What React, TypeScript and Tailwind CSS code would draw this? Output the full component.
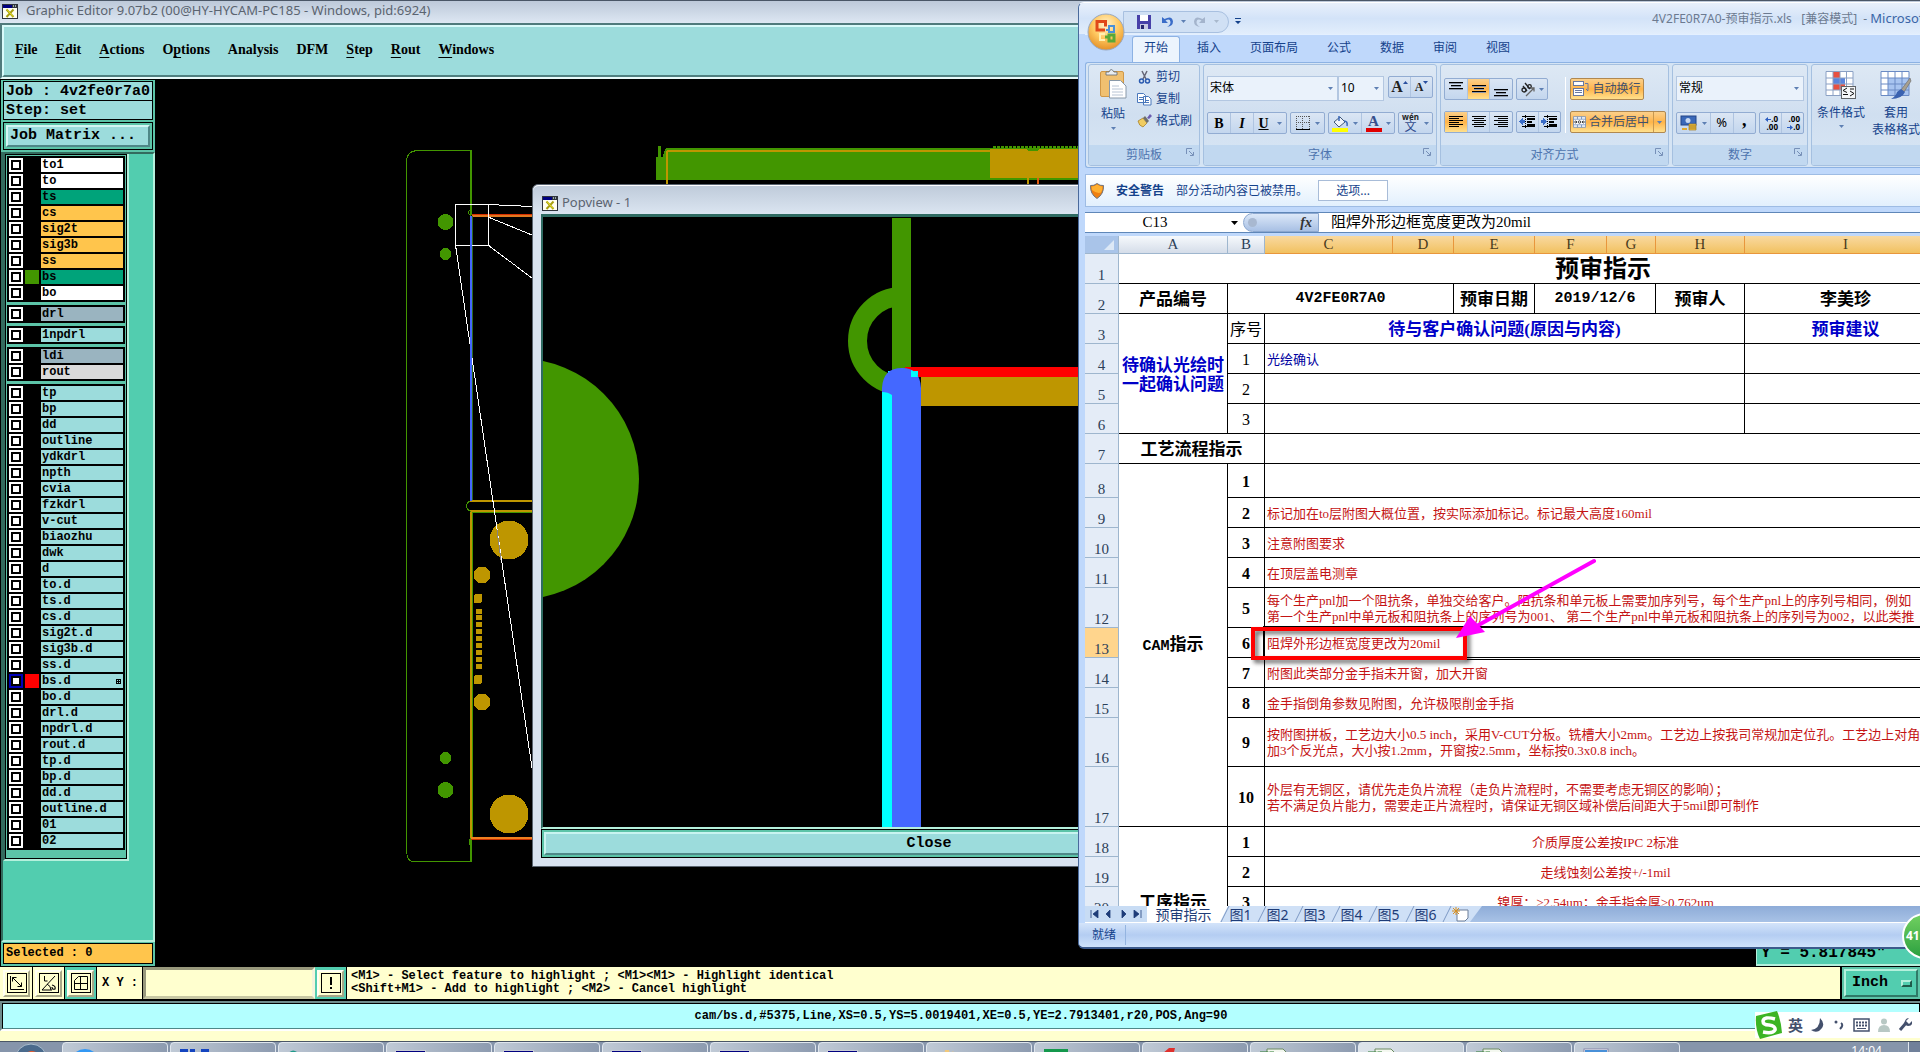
import React from 'react';

const SERIF = "font-['Liberation_Serif','Noto_Sans_CJK_SC',serif]";
const MONO = "font-['Liberation_Mono','Noto_Sans_CJK_SC',monospace]";
const UI = "font-['Noto_Sans','Noto_Sans_CJK_SC',sans-serif]";

/* ---------- CAM editor ---------- */

function XIcon() {
  return (
    <svg width="16" height="15" viewBox="0 0 16 15" className="shrink-0">
      <rect width="16" height="15" fill="#30343c" />
      <rect x="1" y="4" width="14" height="10" fill="#fffef0" />
      <rect x="1" y="1" width="9" height="3" fill="#000080" />
      <rect x="11" y="1" width="1" height="2" fill="#9aa" />
      <rect x="13" y="1" width="1" height="2" fill="#9aa" />
      <path d="M4.500 5.500l7 7.500M11.500 5.500l-7 7.500" stroke="#a8a010" strokeWidth="2" />
      <path d="M5 5.500l6 7" stroke="#e8e020" strokeWidth="1" />
    </svg>
  );
}

const menus: [string, string, string][] = [
  ['', 'F', 'ile'], ['', 'E', 'dit'], ['', 'A', 'ctions'], ['O', 'p', 'tions'], ['Analysis', '', ''],
  ['DFM', '', ''], ['', 'S', 'tep'], ['', 'R', 'out'], ['', 'W', 'indows'],
];

type Layer = { name: string; bg?: string; swatch?: string };
const WHITE = 'bg-white';
const GREEN = 'bg-[#00a37a]';
const ORANGE = 'bg-[#ffc54c]';
const STEEL = 'bg-[#9ab4c0]';
const AQUA = 'bg-[#9cdcdc]';

const layerGroups: Layer[][] = [
  [
    { name: 'to1', bg: WHITE }, { name: 'to', bg: WHITE }, { name: 'ts', bg: GREEN }, { name: 'cs', bg: ORANGE },
    { name: 'sig2t', bg: ORANGE }, { name: 'sig3b', bg: ORANGE }, { name: 'ss', bg: ORANGE },
    { name: 'bs', bg: GREEN, swatch: 'bg-[#429600]' }, { name: 'bo', bg: WHITE },
  ],
  [{ name: 'drl', bg: STEEL }],
  [{ name: '1npdrl' }],
  [{ name: 'ldi', bg: STEEL }, { name: 'rout', bg: 'bg-[#dadada]' }],
  [
    ...['tp', 'bp', 'dd', 'outline', 'ydkdrl', 'npth', 'cvia', 'fzkdrl', 'v-cut', 'biaozhu', 'dwk', 'd', 'to.d', 'ts.d', 'cs.d', 'sig2t.d', 'sig3b.d', 'ss.d'].map((name) => ({ name })),
    { name: 'bs.d', swatch: 'bg-[#ff0000]' },
    ...['bo.d', 'drl.d', 'npdrl.d', 'rout.d', 'tp.d', 'bp.d', 'dd.d', 'outline.d', '01', '02'].map((name) => ({ name })),
  ],
];

function LayerRow({ layer }: { layer: Layer }) {
  const active = layer.name === 'bs.d';
  const id = `layer-${layer.name}`;
  return (
    <div className="flex h-[14px] gap-[2px]">
      <input
        id={id}
        type="checkbox"
        className={`m-0 size-[14px] shrink-0 appearance-none border-2 bg-white ${active ? 'border-[#0000b8]' : 'border-white'} shadow-[inset_0_0_0_2px_#000]`}
      />
      <span className={`w-[14px] shrink-0 ${layer.swatch ?? 'bg-black'}`} />
      <label htmlFor={id} className={`flex flex-1 items-center justify-between pr-[2px] pl-[1px] leading-[14px] ${layer.bg ?? AQUA}`}>
        {layer.name}
        {active && (
          <svg width="5" height="5" viewBox="0 0 5 5" shapeRendering="crispEdges">
            <path d="M0 .5h5M0 2.500h5M0 4.500h5M.5 0v5M2.500 0v5M4.500 0v5" stroke="#000" strokeWidth="1" />
            <path d="M1 1h1v1H1zM3 1h1v1H3zM1 3h1v1H1zM3 3h1v1H3z" fill="#9cdcdc" />
          </svg>
        )}
      </label>
    </div>
  );
}

function SidePanel() {
  return (
    <aside className={`flex w-[155px] shrink-0 flex-col border-t border-l border-black bg-[#5cc4a8] font-bold text-black ${MONO}`}>
      <div className="flex flex-col px-[2px] pt-[1px] text-[15px] whitespace-pre">
        <div className="h-[20px] border border-black bg-[#9cdcdc] pl-[2px] leading-[19px]">Job : 4v2fe0r7a0</div>
        <div className="h-[19px] border border-t-0 border-black bg-[#9cdcdc] pl-[2px] leading-[19px]">Step: set</div>
        <div className="mt-[2px] h-[28px] border border-black p-[2px]">
          <button className="block h-full w-full border-2 border-t-[#d4f6f4] border-r-[#4f8888] border-b-[#4f8888] border-l-[#d4f6f4] bg-[#9cdcdc] pl-[2px] text-left leading-[18px]">
            Job Matrix ...
          </button>
        </div>
      </div>
      <div className="mt-[2px] flex-1 border-2 border-t-[#336b5e] border-r-[#b4f0dc] border-b-[#b4f0dc] border-l-[#336b5e] bg-[#52cdaf]">
        <div className="w-[126px] border-r-2 border-b-2 border-l-2 border-r-[#b4f0dc] border-b-[#b4f0dc] border-l-[#336b5e]">
          <div className="border border-black bg-[#5cc4a8] px-[1px] pt-[1px] pb-[8px] text-[12px]">
            <div className="flex flex-col gap-[3px]">
              {layerGroups.map((g, i) => (
                <div key={i} className="flex flex-col gap-[2px] bg-black p-[2px]">
                  {g.map((l) => <LayerRow key={l.name} layer={l} />)}
                </div>
              ))}
            </div>
          </div>
        </div>
      </div>
      <div className="mx-[2px] mt-[1px] mb-[2px] h-[21px] border border-black bg-[#ffc54c] pl-[2px] text-[12px] leading-[18px]">Selected : 0</div>
    </aside>
  );
}

function Board() {
  const pads = [611, 617, 624, 631, 638, 645, 652, 659, 666];
  const teeth = Array.from({ length: 28 }, (_, i) => 993 + i * 4);
  return (
    <svg className="h-full w-full bg-black" shapeRendering="crispEdges">
      <g transform="translate(-155 -79)" fill="none">
        <path d="M471.500 215V150.500H417.500Q406.500 151 406.500 162V850Q407 861.500 413 861.500H471.500V838" stroke="#429600" />
        <path d="M471 151V215M471 838V861" stroke="#429600" strokeWidth="2" />
        <g fill="#429600">
          <circle cx="445.500" cy="222" r="8" /><circle cx="445.500" cy="254" r="6" />
          <circle cx="445.500" cy="758" r="6" /><circle cx="445.500" cy="790" r="8" />
        </g>
        <path d="M472 214.500H532" stroke="#d83000" />
        <path d="M472 216H532" stroke="#e07820" strokeWidth="2" />
        <path d="M472.500 216V500" stroke="#2c6a20" />
        <path d="M470 501H532M470 511H532" stroke="#be9600" strokeWidth="2" />
        <path d="M472.500 512.500H532M472.500 512V838M471 500Q462 506 471 512M471 209Q466 213 471 216M471 838q-4 4 0 8" stroke="#429600" />
        <path d="M471 512V838" stroke="#be9600" strokeWidth="2" />
        <path d="M471 838H532" stroke="#f08020" strokeWidth="2" />
        <path d="M471 839.500H532" stroke="#c83000" />
        <g fill="#be9600">
          <circle cx="509" cy="540" r="19.500" /><circle cx="509" cy="814" r="19.500" />
          <circle cx="482" cy="575" r="8.500" /><circle cx="482" cy="702" r="8.500" />
          <rect x="474" y="594" width="8" height="9" rx="2" /><rect x="474" y="675" width="8" height="9" rx="2" />
          {pads.map((y) => <rect key={y} x="476" y={y - 2} width="6" height="5" />)}
        </g>
        <path d="M455.500 204.500H488.500V245.500H455.500ZM488 204.500L532 206.500M488 217L532 235M488 245L532 278M455.500 245L532 768" stroke="#fff" />
        <path d="M497 530L501 560" stroke="#8c8478" />
        <path d="M471 216V501" stroke="#4468ff" strokeWidth="2" />
        <path d="M656 157H658V146H661V157H663Q664 148 668 148H1100V180H656Z" fill="#429600" />
        <path d="M666.500 184V153Q667 150.500 670 150.500H1090" stroke="#be9600" strokeWidth="2" />
        <rect x="990" y="149" width="100" height="29" fill="#be9600" />
        <path d="M1025 148h16l-4 3h-8z" fill="#429600" />
        {teeth.map((x) => <rect key={x} x={x} y="146" width="3" height="2" fill="#429600" />)}
        <path d="M1027.500 178V184" stroke="#be9600" strokeWidth="2" />
        <path d="M1037.500 178V184" stroke="#e05a10" strokeWidth="2" />
      </g>
    </svg>
  );
}

function Popview() {
  return (
    <section className="absolute top-[184px] bottom-[185px] left-[532px] flex w-[794px] flex-col rounded-t-md border border-[#5a6470] bg-[#d9e3f0] px-[8px] pb-[8px]">
      <header className={`-mx-[8px] flex h-[29px] shrink-0 items-center gap-[4px] rounded-t-md border-t border-white bg-linear-to-b from-[#bfcbda] to-[#dbe5f1] pt-[6px] pl-[9px] text-[13px] text-[#5b6470] ${UI}`}>
        <XIcon />
        Popview - 1
      </header>
      <div className="min-h-0 flex-1 border-t-[3px] border-b-2 border-l-2 border-t-[#2f6b62] border-b-[#b4f0dc] border-l-[#2f6b62] bg-black">
        <svg className="block h-full w-full bg-black">
          <g transform="translate(-543 -217)">
            <circle cx="518.500" cy="479" r="120.500" fill="#429600" />
            <path d="M911 296.500H902A44.500 44.500 0 0 0 902 385.500" fill="none" stroke="#429600" strokeWidth="19" />
            <path d="M892 218h19v155h-19z" fill="#429600" />
            <path d="M905 367h500v10h-500z" fill="#f00" />
            <path d="M921 377h500v29h-500z" fill="#be9600" />
            <path d="M882 388h20v500h-20zM888 371h30v6h-30z" fill="#0ff" />
            <path d="M882 392V388Q883 368 902 368Q920 368 921 388V900H892V395Q888 392 882 392Z" fill="#4468ff" />
            <path d="M911 370q6 2 7 7h-7z" fill="#0ff" />
          </g>
        </svg>
      </div>
      <div className="h-[29px] shrink-0 border border-black bg-[#5cc4a8] p-[2px]">
        <button className={`block h-full w-full border-2 border-t-[#c8f4f0] border-r-[#4f8888] border-b-[#4f8888] border-l-[#c8f4f0] bg-[#9cdcdc] text-[15px] leading-[20px] font-bold text-black ${MONO}`}>
          Close
        </button>
      </div>
    </section>
  );
}

function ToolButton({ teal, label, children }: { teal?: boolean; label: string; children: React.ReactNode }) {
  return (
    <div className={`flex w-[32px] shrink-0 items-center justify-center border-r border-black ${teal ? 'bg-[#52cdaf]' : 'bg-[#ffffcf]'}`}>
      <button aria-label={label} className="flex size-[27px] items-center justify-center border-2 border-t-[#fffff4] border-r-[#a8a888] border-b-[#a8a888] border-l-[#fffff4] bg-[#ffffcf]">
        <svg width="20" height="20" viewBox="0 0 20 20" fill="none" stroke="#000" strokeWidth="1">
          <rect x=".5" y=".5" width="19" height="19" />
          {children}
        </svg>
      </button>
    </div>
  );
}

function CommandBar() {
  return (
    <div className={`flex h-[35px] border-t border-b-2 border-black bg-[#ffffcf] pl-[1px] text-[12px] font-bold text-black ${MONO}`}>
      <ToolButton label="Measure"><path d="M3.500 3v13.500H17M5.500 4.500l9 9M5.500 4.500v4M5.500 4.500h4M14.500 13.500v-4M14.500 13.500h-4" /></ToolButton>
      <ToolButton label="Angle"><path d="M3 17L16 3M5.500 3v5h3M3 17h10M8 11q4 2 4 6" /><path d="M13 12q4 1 3 4q-3 1-3-2" strokeWidth="1.200" /></ToolButton>
      <ToolButton teal label="Grid"><path d="M3.500 16.500v-9l4-4h9v13zM3.500 10.500h13M9.500 3.500v13" /></ToolButton>
      <label htmlFor="xy" className="flex w-[46px] shrink-0 items-center justify-center whitespace-pre">X Y :</label>
      <input id="xy" defaultValue="" className="w-[172px] shrink-0 border-[3px] border-t-[#98987c] border-r-[#f4f4dc] border-b-[#c8c8a4] border-l-[#98987c] bg-[#ffffcf] outline outline-black" />
      <ToolButton teal label="Information"><path d="M10 4v8M10 14v2" strokeWidth="2" /></ToolButton>
      <div className="ml-[4px] flex-1 pt-[3px] leading-[13px] whitespace-pre">
        <p>{'<M1> - Select feature to highlight ; <M1><M1> - Highlight identical'}</p>
        <p>{'<Shift+M1> - Add to highlight ; <M2> - Cancel highlight'}</p>
      </div>
      <div className="w-[80px] border-l-2 border-black bg-[#5cc4a8] p-[2px]">
        <button className={`flex h-full w-full items-center justify-between border-2 border-t-[#b4f0dc] border-r-[#2f7a68] border-b-[#2f7a68] border-l-[#b4f0dc] bg-[#52cdaf] pr-[4px] pl-[6px] text-[15px] ${MONO}`}>
          Inch
          <span className="h-[7px] w-[11px] border-2 border-t-[#b4f0dc] border-r-[#1f5a4a] border-b-[#1f5a4a] border-l-[#b4f0dc]" />
        </button>
      </div>
    </div>
  );
}

/* ---------- Taskbar ---------- */

const appIcons = [
  <circle key="a" cx="14" cy="18" r="15" fill="#3398f4" />,
  <path key="b" d="M1 3h8v24H1zM11 3h5v24h-5zM22 3h8v24h-8z" fill="#1444c0" />,
  <path key="c" d="M1 8q4-6 9-2l2 3h12v16H1z" fill="#1f9a8a" />,
  ...[0, 1, 2, 3, 4].map((n) => (
    <g key={'w' + n}><rect x="0" y="4" width="31" height="24" fill="#c8ccd4" /><rect x="1" y="5" width="29" height="8" fill="#000080" /><path d="M19 7h2v2h-2zM23 7h2v2h-2zM27 7h2v2h-2z" fill="#fff" /></g>
  )),
  <path key="h" d="M14 30L3 14l3-5 3 2 1-7h4l1 5 3-4 3 6 4-1z" fill="#f0c87c" />,
  <path key="i" d="M1 3h24v4H9l-3 20H1z" fill="#14984c" />,
  <path key="j" d="M4 14L18 2h6l-3 12 2 14H8z" fill="#e0302c" />,
  ...[0, 1, 2].map((n) => (
    <g key={'x' + n}><path d="M8 3h16l6 6v20H8z" fill="#f4f8f0" stroke="#6a8a60" /><path d="M1 6h14l-3 6 3 8H1z" fill="#6ab04c" stroke="#2a7a30" /><path d="M4 15L11 6" stroke="#fff" strokeWidth="3" /></g>
  )),
  <g key="p"><rect x="1" y="3" width="24" height="20" fill="#fff" stroke="#88a" /><rect x="2" y="4" width="22" height="4" fill="#4890d8" /><circle cx="16" cy="15" r="6" fill="#f0a040" /></g>,
];

function Taskbar() {
  return (
    <footer className="flex h-[11px] overflow-hidden border-t border-[#4a5666] bg-[#8695ab]">
      <div className="flex w-[62px] shrink-0 justify-center">
        <svg width="32" height="32" viewBox="0 0 32 32" className="shrink-0">
          <circle cx="16" cy="18" r="16" fill="#4a6a8c" stroke="#a8bccc" />
          <path d="M9 14q5-8 14-3l-2 6q-6-3-11 0z" fill="#e85a2c" />
        </svg>
      </div>
      <div className="flex min-w-0 flex-1 gap-[2px]">
        {appIcons.map((icon, i) => (
          <button key={i} aria-label={`Window ${i + 1}`} className={`h-[40px] w-[106px] shrink-0 rounded-sm border border-[#dfe6ee] pl-[8px] ${i === 12 ? 'bg-linear-to-r from-[#dde4ea] to-[#c4ced8]' : 'bg-linear-to-r from-[#c0cad6] to-[#8d9bb0]'}`}>
            <svg width="32" height="32" viewBox="0 0 32 32">{icon}</svg>
          </button>
        ))}
      </div>
      <time className={`mr-[26px] pt-[1px] text-[12px] leading-[16px] text-white ${UI}`}>14:04</time>
      <div className="h-[40px] w-[12px] border-l border-[#dfe6ee] bg-[#70809a]" />
    </footer>
  );
}

/* ---------- Spreadsheet ---------- */

const Drop = ({ dim }: { dim?: boolean }) => (
  <svg width="5" height="3" viewBox="0 0 5 3" className="shrink-0"><path d="M0 0h5L2.500 3z" fill={dim ? '#a8b8cc' : '#5d7fb3'} /></svg>
);

const BTN = 'flex items-center justify-center';
const BAR = 'flex h-[22px] items-stretch rounded-[2px] border border-[#92acd2] bg-linear-to-b from-[#dbe6f4] to-[#c3d6ee] divide-x divide-[#afc4e0]';
const HOT = 'bg-linear-to-b from-[#fbd08a] via-[#ffb448] to-[#ffe08c]';

function Group({ label, launcher, className, children }: { label: string; launcher?: boolean; className: string; children: React.ReactNode }) {
  return (
    <section className={`flex h-[102px] shrink-0 flex-col overflow-hidden rounded-[3px] border border-[#a5c0e0] bg-linear-to-b from-[#dde8f4] via-[#d0dff0] to-[#d8e6f5] ${className}`}>
      <div className="min-h-0 flex-1">{children}</div>
      <div className="relative h-[20px] bg-[#c1d8f0] text-center text-[12px] leading-[20px] text-[#4d74ae]">
        {label}
        {launcher && (
          <svg width="8" height="8" viewBox="0 0 8 8" fill="none" stroke="#7790b8" className="absolute top-[3px] right-[5px]">
            <path d="M.5 6V.5H6M3 3l4 4M7.500 4v3.500H4" />
          </svg>
        )}
      </div>
    </section>
  );
}

function Lines({ rows }: { rows: [number, number, number][] }) {
  return (
    <svg width="16" height="16" viewBox="0 0 16 16" shapeRendering="crispEdges">
      {rows.map(([a, b, y], i) => <path key={i} d={`M${a} ${y + 0.5}H${b}`} stroke="#000" />)}
    </svg>
  );
}

/* Vertical alignment icons use strokes two pixels thick. */
function ThickLines({ y }: { y: number }) {
  return (
    <svg width="16" height="16" viewBox="0 0 16 16" shapeRendering="crispEdges">
      <path d={`M1 ${y}h14v2h-14zM3 ${y + 3}h10v2h-10zM1 ${y + 6}h14v2h-14z`} fill="#000" />
      <path d={`M1 ${y + 1.5}h14M3 ${y + 4.5}h10M1 ${y + 7.5}h14`} stroke="#8c98ac" />
    </svg>
  );
}

function Indent({ flip }: { flip?: boolean }) {
  return (
    <svg width="18" height="16" viewBox="0 0 18 16" shapeRendering="crispEdges">
      <path d="M3 2.500h13M3 12.500h13" stroke="#000" />
      <path d="M8 5h8M8 8h5M8 11h8" stroke="#000" strokeWidth="2" />
      <path d="M6.500 1v14" stroke="#000" strokeDasharray="1 1" />
      <path d={flip ? 'M6 7.500L2 4v2H0v3h2v2z' : 'M0 7.500L4 4v2h2v3H4v2z'} fill="#3a6cc8" />
    </svg>
  );
}

function ClipboardGroup() {
  const items = [
    { t: '剪切', i: <g stroke="#3a5a8c" fill="none" strokeWidth="1.500"><path d="M5 1l4 8M10 1L6 9" stroke="#667" /><circle cx="4.500" cy="11" r="2" stroke="#2a5ab0" /><circle cx="10.500" cy="11" r="2" stroke="#2a5ab0" /></g> },
    { t: '复制', i: <g fill="#fff" stroke="#4a78bc"><path d="M.5 1.500h6l2 2v7h-8zM6.500 4.500h5l2.500 2.500v6h-7.500z" /><path d="M2 5.500h4M2 7.500h4M8 8.500h4M8 10.500h4" /></g> },
    { t: '格式刷', i: <g><path d="M1 7l5-3 4 5-4 4q-4-1-5-6z" fill="#f0cc60" stroke="#a07820" strokeWidth=".7" /><path d="M6 4l2-2 4 5-2 2z" fill="#70706c" /><path d="M10 4l3-4 2 2-3 3z" fill="#6a5cb0" /></g> },
  ];
  return (
    <Group label="剪贴板" launcher className="w-[112px]">
      <div className="flex gap-[11px] pl-[11px]">
        <button className="flex w-[26px] flex-col items-center pt-[4px]">
          <svg width="27" height="30" viewBox="0 0 27 30">
            <rect x=".5" y="2.500" width="23" height="25" rx="1.500" fill="#f0c070" stroke="#d09848" />
            <path d="M6 6V3h3q2-5 5 0h3v3z" fill="#e8ecf0" stroke="#606870" strokeWidth=".8" />
            <path d="M9.500 11.500h11l5.500 5.500v12H9.500z" fill="#fff" stroke="#8898a8" />
            <path d="M12 17h7M12 20h11M12 23h11M12 26h11" stroke="#b8c4d4" />
          </svg>
          <span className="mt-[6px] leading-[18px] whitespace-nowrap">粘贴</span>
          <span className="mt-[4px]"><Drop /></span>
        </button>
        <div className="flex flex-col pt-[1px]">
          {items.map((it) => (
            <button key={it.t} className="flex h-[22px] items-center gap-[3px] whitespace-nowrap">
              <svg width="16" height="15" viewBox="0 0 16 15">{it.i}</svg>
              {it.t}
            </button>
          ))}
        </div>
      </div>
    </Group>
  );
}

function Combo({ label, value, className }: { label: string; value: string; className: string }) {
  return (
    <div className={`relative h-[25px] border border-[#b3c7e1] bg-[#eaf2fb] ${className}`}>
      <select aria-label={label} className="h-full w-full appearance-none bg-transparent pb-[2px] pl-[2px] text-[12px] text-black">
        <option>{value}</option>
      </select>
      <span className="pointer-events-none absolute top-[10px] right-[4px] flex"><Drop /></span>
    </div>
  );
}

function FontGroup() {
  return (
    <Group label="字体" launcher className="w-[234px]">
      <div className="flex h-[47px] pt-[11px] pl-[3px]">
        <Combo label="字体名称" value="宋体" className="w-[131px]" />
        <Combo label="字号" value="10" className="w-[46px]" />
        <div className={`${BAR} ml-[4px] w-[45px] ${SERIF} font-bold text-[#222]`}>
          <button className={`${BTN} flex-1 text-[16px]`}>A<svg width="5" height="12"><path d="M0 3h5L2.500 0z" fill="#2a50a0" /></svg></button>
          <button className={`${BTN} flex-1 text-[12px]`}>A<svg width="5" height="12"><path d="M0 0h5L2.500 3z" fill="#2a50a0" /></svg></button>
        </div>
      </div>
      <div className="flex gap-[3px] pl-[3px] text-black">
        <div className={`${BAR} w-[80px] ${SERIF} text-[14px] font-bold`}>
          <button className={`${BTN} w-[23px]`}>B</button>
          <button className={`${BTN} w-[23px] italic`}>I</button>
          <button className={`${BTN} flex-1 gap-[8px]`}><u>U</u><Drop /></button>
        </div>
        <div className={`${BAR} w-[35px]`}>
          <button aria-label="边框" className={`${BTN} flex-1 gap-[5px]`}>
            <svg width="14" height="14" viewBox="0 0 14 14" fill="none" stroke="#555"><path d="M.5 0v13M6.500 0v13M13.500 0v13M0 .5h14M0 6.500h14" strokeDasharray="1 1" /><path d="M0 13.500h14" stroke="#000" /></svg>
            <Drop />
          </button>
        </div>
        <div className={`${BAR} w-[67px]`}>
          <button aria-label="填充颜色" className={`${BTN} flex-1 gap-[4px]`}>
            <svg width="17" height="17" viewBox="0 0 17 17"><path d="M2 7l6-5 5 5-6 5z" fill="#f0f4fa" stroke="#405878" /><path d="M7 6V1M12 6q4 0 3 5" fill="none" stroke="#3a68b8" strokeWidth="1.500" /><rect y="13" width="16" height="4" fill="#ffff00" /></svg>
            <Drop />
          </button>
          <button aria-label="字体颜色" className={`${BTN} flex-1 gap-[4px]`}>
            <span className={`flex h-[17px] w-[16px] flex-col items-center border-b-4 border-[#e00000] text-[15px] leading-[13px] font-bold text-[#36508c] ${SERIF}`}>A</span>
            <Drop />
          </button>
        </div>
        <div className={`${BAR} w-[35px]`}>
          <button className={`${BTN} flex-1 gap-[5px]`}>
            <span className="flex flex-col items-center text-[#2f4a8c]"><span className="text-[8px] leading-[8px] font-bold text-[#222]">wén</span><span className="text-[12px] leading-[12px]">文</span></span>
            <Drop />
          </button>
        </div>
      </div>
    </Group>
  );
}

function AlignGroup() {
  return (
    <Group label="对齐方式" launcher className="w-[229px]">
      <div className="flex h-full pl-[3px]">
        <div className="flex flex-col gap-[11px] pt-[13px]">
          <div className="flex gap-[3px]">
            <div className={`${BAR} w-[69px]`}>
              <button aria-label="顶端对齐" className={`${BTN} flex-1`}><ThickLines y={1} /></button>
              <button aria-label="垂直居中" className={`${BTN} flex-1 ${HOT}`}><ThickLines y={4} /></button>
              <button aria-label="底端对齐" className={`${BTN} flex-1`}><ThickLines y={8} /></button>
            </div>
            <div className={`${BAR} w-[32px]`}>
              <button aria-label="方向" className={`${BTN} flex-1 gap-[3px]`}>
                <svg width="16" height="16" viewBox="0 0 16 16" fill="none" stroke="#222" strokeWidth="1.300"><circle cx="4" cy="9" r="2" /><path d="M3 5l4 5M5 2l5 6" /><circle cx="9.500" cy="5.500" r="1.800" /><path d="M6 15l8-8M10.500 7H14v3.500" stroke="#666" /></svg>
                <Drop />
              </button>
            </div>
          </div>
          <div className="flex gap-[3px]">
            <div className={`${BAR} w-[69px]`}>
              <button aria-label="左对齐" className={`${BTN} flex-1 ${HOT}`}><Lines rows={[[1, 15, 2], [1, 11, 4], [1, 15, 6], [1, 11, 8], [1, 15, 10], [1, 11, 12]]} /></button>
              <button aria-label="居中" className={`${BTN} flex-1`}><Lines rows={[[1, 15, 2], [3, 13, 4], [1, 15, 6], [3, 13, 8], [1, 15, 10], [3, 13, 12]]} /></button>
              <button aria-label="右对齐" className={`${BTN} flex-1`}><Lines rows={[[1, 15, 2], [5, 15, 4], [1, 15, 6], [5, 15, 8], [1, 15, 10], [5, 15, 12]]} /></button>
            </div>
            <div className={`${BAR} w-[45px]`}>
              <button aria-label="减少缩进量" className={`${BTN} flex-1`}><Indent /></button>
              <button aria-label="增加缩进量" className={`${BTN} flex-1`}><Indent flip /></button>
            </div>
          </div>
        </div>
        <div className="mt-[12px] mr-[4px] ml-[4px] h-[56px] border-l border-white" />
        <div className="flex flex-col items-start gap-[11px] pt-[13px] whitespace-nowrap text-[#40506c]">
          <button className={`${BTN} h-[22px] w-[74px] gap-[3px] rounded-[2px] border border-[#b08850] ${HOT}`}>
            <svg width="16" height="16" viewBox="0 0 16 16" fill="#fff" stroke="#6878a0"><rect x=".5" y=".5" width="10" height="4" /><rect x=".5" y="7.500" width="10" height="7" /><path d="M2 9.500h7M2 11.500h7M12 2.500h3v7M13 8l2 2" fill="none" /></svg>
            自动换行
          </button>
          <button className={`flex h-[22px] w-[96px] items-center gap-[3px] rounded-[2px] border border-[#b08850] pl-[2px] ${HOT}`}>
            <svg width="16" height="16" viewBox="0 0 16 16"><path d="M.5 1.500h15v13H.5zM5.500 1.500v3M10.500 1.500v3M5.500 11.500v3M10.500 11.500v3M.5 4.500h15M.5 11.500h15" fill="#fff" stroke="#6888b8" /><path d="M1 8h4M11 8h4M3 6.500L5 8 3 9.500M13 6.500L11 8l2 1.500" stroke="#222" fill="none" /><circle cx="8" cy="8" r="1.500" fill="none" stroke="#222" /></svg>
            合并后居中
            <span className="ml-[1px] flex h-full items-center border-l border-[#c89850] px-[3px]"><Drop /></span>
          </button>
        </div>
      </div>
    </Group>
  );
}

function NumberGroup() {
  return (
    <Group label="数字" launcher className="w-[136px]">
      <div className="flex h-[47px] pt-[11px] pl-[3px]"><Combo label="数字格式" value="常规" className="w-[128px]" /></div>
      <div className="flex gap-[3px] pl-[3px] text-black">
        <div className={`${BAR} w-[80px]`}>
          <button aria-label="会计数字格式" className={`${BTN} w-[34px] gap-[4px]`}>
            <svg width="18" height="16" viewBox="0 0 18 16"><rect x="1" y="1" width="15" height="9" fill="#3a68b8" stroke="#224488" /><circle cx="8" cy="5.500" r="2.500" fill="#c8d8f0" /><path d="M9 9h7v6H9z" fill="#f0c040" stroke="#a88020" strokeWidth=".7" /><path d="M9 11h7M9 13h7" stroke="#a88020" /><path d="M2 13h5v2H2z" fill="#e0a830" /></svg>
            <Drop />
          </button>
          <button className={`${BTN} flex-1 text-[13px]`}>%</button>
          <button className={`${BTN} flex-1 pb-[6px] text-[18px] leading-[16px] font-bold ${SERIF}`}>,</button>
        </div>
        <div className={`${BAR} w-[45px] text-[8px] leading-[8px] font-bold`}>
          <button aria-label="增加小数位数" className={`flex flex-1 flex-col items-end justify-center pr-[3px]`}>
            <span className="flex items-center"><svg width="6" height="5" viewBox="0 0 6 5"><path d="M0 2.500L3 0v2h3v1H3v2z" fill="#2a5cc0" /></svg>.0</span>
            <span>.00</span>
          </button>
          <button aria-label="减少小数位数" className={`flex flex-1 flex-col items-end justify-center pr-[3px]`}>
            <span>.00</span>
            <span className="flex items-center"><svg width="6" height="5" viewBox="0 0 6 5"><path d="M6 2.500L3 0v2H0v1h3v2z" fill="#2a5cc0" /></svg>.0</span>
          </button>
        </div>
      </div>
    </Group>
  );
}

function StylesGroup() {
  return (
    <Group label="样式" className="w-[330px]">
      <div className="flex">
        <button className="flex w-[58px] flex-col items-center pt-[6px]">
          <svg width="32" height="29" viewBox="0 0 32 29">
            <path d="M1 1h27v24H1z" fill="#fff" />
            <path d="M8 1h7v6H8zM8 13h12v6H8z" fill="#e85040" /><path d="M8 7h12v6H8z" fill="#5a84dc" />
            <path d="M1 .5h27v24H1zM1 7h27M1 13h27M1 19h27M8 1v24M15 1v24M21.500 1v24" fill="none" stroke="#8aa0c4" />
            <rect x="16.500" y="15.500" width="14" height="12" fill="#f4f6f8" stroke="#606468" />
            <path d="M22 17l-4 2.500 4 2M18 23.500h5M25 20l4 2.500-4 2.500M25 18h4" stroke="#111" fill="none" />
          </svg>
          <span className="mt-[4px] leading-[18px] whitespace-nowrap">条件格式</span>
          <span className="mt-[3px]"><Drop /></span>
        </button>
        <button className="flex w-[52px] flex-col items-center pt-[6px]">
          <svg width="32" height="29" viewBox="0 0 32 29">
            <path d="M1 1h28v24H1z" fill="#fff" /><path d="M8 7h21v18H8z" fill="#a8c4f0" />
            <path d="M1 .5h28v24H1zM1 7h28M1 13h28M1 19h28M8 1v24M15 1v24M22 1v24" fill="none" stroke="#6a8ac4" />
            <path d="M30 7l-9 12 3 2 7-11z" fill="#a8a090" stroke="#666" strokeWidth=".6" /><path d="M21 18l4 3q-3 7-14 7 5-3 6-7z" fill="#3a62b0" />
          </svg>
          <span className="mt-[4px] leading-[17px] whitespace-nowrap">套用<br />表格格式</span>
        </button>
      </div>
    </Group>
  );
}

const columns = [
  { n: 'A', w: 'w-[109px]' }, { n: 'B', w: 'w-[37px]' }, { n: 'C', w: 'w-[128px]', s: true }, { n: 'D', w: 'w-[61px]', s: true },
  { n: 'E', w: 'w-[81px]', s: true }, { n: 'F', w: 'w-[72px]', s: true }, { n: 'G', w: 'w-[49px]', s: true },
  { n: 'H', w: 'w-[89px]', s: true }, { n: 'I', w: 'w-[202px]', s: true }, { n: 'J', w: 'w-[141px]', s: true },
];

const CELL = 'border-r border-b border-black px-0 pt-[2px] pb-0';
const BIG = 'text-center text-[17px] leading-[24px] font-bold';
const IDX = 'text-center text-[16px] leading-[24px]';
const NOTE = 'text-[13px] leading-[16px] text-[#c41414] whitespace-nowrap';

function Row({ n, h = 'h-[30px]', hot, children }: { n: number | string; h?: string; hot?: boolean; children?: React.ReactNode }) {
  return (
    <tr className={h}>
      <th className={`border-r border-b border-[#9eb6ce] p-0 align-bottom text-[15px] leading-[15px] font-normal text-[#2c4058] ${hot ? 'bg-[#ffd58d]' : 'bg-[#e4ecf7]'}`}>{n}</th>
      {children}
    </tr>
  );
}

const camNotes: { n: number; h?: string; t: string[] }[] = [
  { n: 8, h: 'h-[34px]', t: [''] },
  { n: 9, t: ['标记加在to层附图大概位置，按实际添加标记。标记最大高度160mil'] },
  { n: 10, t: ['注意附图要求'] },
  { n: 11, t: ['在顶层盖电测章'] },
  { n: 12, h: 'h-[40px]', t: ['每个生产pnl加一个阻抗条，单独交给客户。阻抗条和单元板上需要加序列号，每个生产pnl上的序列号相同，例如', '第一个生产pnl中单元板和阻抗条上的序列号为001、 第二个生产pnl中单元板和阻抗条上的序列号为002，以此类推'] },
  { n: 13, t: ['阻焊外形边框宽度更改为20mil'] },
  { n: 14, t: ['附图此类部分金手指未开窗，加大开窗'] },
  { n: 15, t: ['金手指倒角参数见附图，允许极限削金手指'] },
  { n: 16, h: 'h-[49px]', t: ['按附图拼板，工艺边大小0.5 inch，采用V-CUT分板。铣槽大小2mm。工艺边上按我司常规加定位孔。工艺边上对角', '加3个反光点，大小按1.2mm，开窗按2.5mm，坐标按0.3x0.8 inch。'] },
  { n: 17, h: 'h-[60px]', t: ['外层有无铜区，请优先走负片流程（走负片流程时，不需要考虑无铜区的影响）；', '若不满足负片能力，需要走正片流程时，请保证无铜区域补偿后间距大于5mil即可制作'] },
];

function Sheet() {
  return (
    <div className={`min-h-0 flex-1 overflow-hidden bg-white ${SERIF} text-black`}>
      <table className="w-[1003px] table-fixed border-separate border-spacing-0">
        <thead>
          <tr className="h-[18px] text-[15px] leading-[17px]">
            <th className="w-[34px] border-r border-b border-[#9eb6ce] bg-[#a9c4e9] p-0">
              <svg width="10" height="10" className="mr-[4px] ml-auto"><path d="M10 0v10H0z" fill="#dce8f6" /></svg>
            </th>
            {columns.map((c) => (
              <th key={c.n} className={`border-r border-b p-0 font-normal ${c.w} ${c.s ? 'border-[#e8963c] bg-linear-to-b from-[#f9d99f] to-[#f1c15f] text-[#4a3c20]' : 'border-[#9eb6ce] bg-linear-to-b from-[#f6f9fc] to-[#d5dde9] text-[#2c4058]'}`}>{c.n}</th>
            ))}
          </tr>
        </thead>
        <tbody>
          <Row n={1}><td colSpan={10} className={`${CELL} text-center text-[24px] leading-[27px] font-bold`}>预审指示</td></Row>
          <Row n={2}>
            <td className={`${CELL} ${BIG}`}>产品编号</td>
            <td colSpan={3} className={`${CELL} text-center text-[15px] font-bold ${MONO}`}>4V2FE0R7A0</td>
            <td className={`${CELL} ${BIG} whitespace-nowrap`}>预审日期</td>
            <td colSpan={2} className={`${CELL} text-center text-[15px] font-bold ${MONO}`}>2019/12/6</td>
            <td className={`${CELL} ${BIG}`}>预审人</td>
            <td className={`${CELL} ${BIG}`}>李美珍</td>
            <td className={CELL} />
          </Row>
          <Row n={3}>
            <td rowSpan={4} className={`${CELL} ${BIG} text-[#0000c8]`}>
              <div className="leading-[19px]">待确认光绘时</div>
              <div className="leading-[19px]">一起确认问题</div>
            </td>
            <td className={`${CELL} ${IDX}`}>序号</td>
            <td colSpan={6} className={`${CELL} ${BIG} text-[#0000c8]`}>待与客户确认问题(原因与内容)</td>
            <td className={`${CELL} ${BIG} text-[#0000c8]`}>预审建议</td>
            <td className={CELL} />
          </Row>
          {[4, 5, 6].map((n) => (
            <Row key={n} n={n}>
              <td className={`${CELL} ${IDX}`}>{n - 3}</td>
              <td colSpan={6} className={`${CELL} text-[13px] leading-[20px] text-[#0000a0]`}><div className="pl-[2px]">{n === 4 ? '光绘确认' : ''}</div></td>
              <td className={CELL} /><td className={CELL} />
            </Row>
          ))}
          <Row n={7}>
            <td colSpan={2} className={`${CELL} ${BIG}`}>工艺流程指示</td>
            <td colSpan={8} className={CELL} />
          </Row>
          {camNotes.map((r, i) => (
            <Row key={r.n} n={r.n} h={r.h} hot={r.n === 13}>
              {i === 0 && <td rowSpan={10} className={`${CELL} ${BIG}`}><span className={`text-[15px] ${MONO}`}>CAM</span>指示</td>}
              <td className={`${CELL} ${IDX} font-bold`}>{i + 1}</td>
              <td colSpan={8} className={`${CELL} ${NOTE} ${r.n === 13 ? 'outline outline-offset-1 outline-black' : ''}`}>
                {r.t.map((line) => <div key={line} className="pl-[2px]">{line}</div>)}
              </td>
            </Row>
          ))}
          {['介质厚度公差按IPC 2标准', '走线蚀刻公差按+/-1mil', '镍厚：≥2.54um；金手指金厚≥0.762um', '', ''].map((t, i) => (
            <Row key={i} n={i < 3 ? 18 + i : ''}>
              {i === 0 && <td rowSpan={5} className={`${CELL} ${BIG}`}>工序指示</td>}
              <td className={`${CELL} ${IDX} font-bold`}>{i < 3 ? i + 1 : ''}</td>
              <td colSpan={7} className={`${CELL} ${NOTE} text-center`}>{t}</td>
              <td className={CELL} />
            </Row>
          ))}
        </tbody>
      </table>
    </div>
  );
}

function SheetTabs() {
  return (
    <nav className={`flex h-[17px] shrink-0 items-stretch border-b border-white bg-linear-to-b from-[#8eacd8] to-[#a8c2e6] text-[14px] leading-[15px] text-[#1e3c78] ${UI}`}>
      <div className="flex w-[62px] items-center justify-around bg-[#c8dcf4] px-[2px]">
        {['M1 0v8M8 0v8L3 4z', 'M6 0v8L2 4z', 'M3 0v8l4-4z', 'M8 0v8M1 0v8l5-4z'].map((d) => (
          <button key={d} aria-label="滚动工作表"><svg width="9" height="8" viewBox="0 0 9 8"><path d={d} fill="#1e3c78" stroke="#1e3c78" strokeWidth=".8" /></svg></button>
        ))}
      </div>
      <button className="w-[73px] bg-white whitespace-nowrap">预审指示</button>
      {['图1', '图2', '图3', '图4', '图5', '图6'].map((t) => (
        <button key={t} className="relative w-[37px] bg-[#cfe0f6] pl-[4px] text-center">
          <svg width="10" height="16" viewBox="0 0 10 16" className="absolute top-0 left-0"><path d="M0 0h8L0 16z" fill={t === '图1' ? '#fff' : '#cfe0f6'} /><path d="M9 0L1 16" stroke="#7c98c4" /></svg>
          {t}
        </button>
      ))}
      <button aria-label="插入工作表" className="relative w-[40px] bg-[#cfe0f6] [clip-path:polygon(0_0,100%_0,70%_100%,0_100%)]">
        <svg width="36" height="16" viewBox="0 0 36 16"><path d="M9 0L1 16" stroke="#7c98c4" /><path d="M15 4h11v8l-3 3h-8z" fill="#fff" stroke="#6a7c98" /><path d="M14 1v8M10 5h8M11 2l6 6M17 2l-6 6" stroke="#d89020" /></svg>
      </button>
    </nav>
  );
}

function Excel() {
  const tabs = ['开始', '插入', '页面布局', '公式', '数据', '审阅', '视图'];
  return (
    <section className={`absolute top-[2px] right-0 bottom-[103px] left-[1078px] flex flex-col overflow-hidden rounded-l-md border-t border-b-2 border-l border-t-white border-b-[#3c5a8c] border-l-[#4a6a9c] bg-[#bfd8fb] pl-[6px] text-[12px] text-[#15428b] ${UI}`}>
      <header className="-ml-[6px] flex h-[31px] shrink-0 items-center bg-linear-to-b from-[#e8f0fb] via-[#d3e3f8] to-[#e2eefc]">
        <div className="mt-[6px] ml-[44px] flex h-[22px] w-[106px] shrink-0 items-center gap-[7px] rounded-r-full border border-[#a8c0e0] bg-[#d0e0f4] pl-[13px]">
          <button aria-label="保存"><svg width="14" height="14" viewBox="0 0 14 14"><path d="M0 0h14v14H0z" fill="#4840a8" /><path d="M3 0h8v6H3z" fill="#fff" /><path d="M3 9h8v5H3z" fill="#c8c8e0" /><path d="M4 10h3v4H4z" fill="#282870" /></svg></button>
          <button aria-label="撤消" className="ml-[2px]"><svg width="14" height="14" viewBox="0 0 14 14"><path d="M2 2v6h6L5.500 5.500Q10 3 10.500 7q0 3-3.500 5Q13 11 13 6.500 12 0 4.500 4z" fill="#3a6cc8" /></svg></button>
          <Drop />
          <button aria-label="恢复"><svg width="14" height="14" viewBox="0 0 14 14"><path d="M12 2v6H6l2.500-2.500Q4 3 3.500 7q0 3 3.500 5Q1 11 1 6.500 2 0 9.500 4z" fill="#a4b4cc" /></svg></button>
          <Drop dim />
        </div>
        <svg width="7" height="7" viewBox="0 0 7 7" className="mt-[6px] ml-[6px] shrink-0"><path d="M0 0h6v1H0zM0 3h6L3 6z" fill="#15428b" /></svg>
        <h1 className="ml-[410px] whitespace-pre text-[#6c7a90]">4V2FE0R7A0-预审指示.xls   [兼容模式]  - <span className="text-[13px] text-[#3a66a7]">Microsoft Excel</span></h1>
      </header>
      <svg width="38" height="38" viewBox="0 0 38 38" className="absolute top-[10px] left-[8px]">
        <defs><radialGradient id="orb" cx=".5" cy=".3" r=".75"><stop offset="0" stopColor="#fff4d0" /><stop offset=".5" stopColor="#ffc860" /><stop offset="1" stopColor="#e08820" /></radialGradient></defs>
        <circle cx="19" cy="19" r="18" fill="url(#orb)" stroke="#98a8c0" />
        <g fill="none"><path d="M18 17h-8V8.500h8.500v5" stroke="#e04818" strokeWidth="3" /><path d="M22 13h5v6h-5zM19 17h2" stroke="#4a90d8" strokeWidth="2" /><path d="M18 21h-5v6h5" stroke="#fff0b0" strokeWidth="2" /><path d="M22 22h5v6h-5zM18 24h3" stroke="#58a838" strokeWidth="3" /></g>
      </svg>
      <nav className="flex h-[28px] shrink-0 items-end gap-[5px] border-t border-[#e4f0ff] pl-[47px]">
        {tabs.map((t, i) => (
          <button key={t} className={`h-[26px] rounded-t-[3px] border border-b-0 px-[11px] leading-[22px] ${i === 0 ? 'border-[#8db2e3] bg-[#ecf4fd]' : 'border-transparent'}`}><span className="block h-full pb-[2px] leading-[21px]">{t}</span></button>
        ))}
      </nav>
      <div className="flex h-[106px] shrink-0 gap-[3px] overflow-hidden rounded-l-[3px] border border-r-0 border-[#8db2e3] bg-[#d5e4f4] pt-[1px] pl-[2px]">
        <ClipboardGroup /><FontGroup /><AlignGroup /><NumberGroup /><StylesGroup />
      </div>
      <div className="mt-[6px] flex h-[33px] shrink-0 items-center border border-r-0 border-[#9ebce4] bg-linear-to-b from-white to-[#e2f0fd] pl-[4px]">
        <svg width="14" height="16" viewBox="0 0 14 16"><path d="M7 .5Q10 3 13.500 2.500 14 11 7 15.500 0 11 .5 2.500 4 3 7 .5z" fill="#f08010" stroke="#70747c" /><path d="M7 1.500Q10 3.500 12.500 3.500 12.500 7 11 9.500 7 11 2 7L1.500 3.500Q4 4 7 1.500z" fill="#ffb030" /></svg>
        <strong className="ml-[12px]">安全警告</strong>
        <span className="ml-[12px]">部分活动内容已被禁用。</span>
        <button className="ml-[10px] h-[21px] w-[70px] border border-[#a8bcd8] bg-white leading-[18px]">选项...</button>
      </div>
      <div className="mt-[5px] mb-[3px] flex h-[21px] shrink-0 border-y border-[#5f87b8] bg-white text-black">
        <label htmlFor="name-box" className="sr-only">名称框</label>
        <input id="name-box" defaultValue="C13" className={`w-[140px] bg-white text-center text-[15px] ${SERIF}`} />
        <svg width="7" height="4" viewBox="0 0 7 4" className="mt-[8px] ml-[6px]"><path d="M0 0h7L3.500 4z" fill="#000" /></svg>
        <div className="ml-[5px] flex w-[76px] items-center justify-between rounded-l-full border border-[#8ca8d0] bg-linear-to-b from-[#dce8f8] to-[#a8c0e4] pr-[6px] pl-[4px]">
          <span className="size-[9px] rounded-full bg-[#a8b8d0]" />
          <em className={`text-[14px] leading-[16px] font-bold text-[#333] ${SERIF}`}>fx</em>
        </div>
        <label htmlFor="formula" className="sr-only">编辑栏</label>
        <input id="formula" defaultValue="阻焊外形边框宽度更改为20mil" className={`min-w-0 flex-1 bg-white pl-[12px] text-[15px] ${SERIF}`} />
      </div>
      <Sheet />
      <SheetTabs />
      <footer className="-ml-[6px] flex h-[24px] shrink-0 items-center bg-linear-to-b from-[#d4e4fa] via-[#b4cdf2] to-[#cfe2fb] pl-[13px]">
        <span className="border-r border-[#94b4e0] pr-[9px] leading-[20px]">就绪</span>
      </footer>
      <svg width="350" height="120" viewBox="1246 551 350 120" className="pointer-events-none absolute top-[548px] left-[167px]">
        <rect x="1253" y="629" width="212" height="29" fill="none" stroke="#f00" strokeWidth="4" className="drop-shadow-[3px_3px_2px_rgba(0,0,0,0.6)]" />
        <path d="M1594 561L1475 627" stroke="#f0f" strokeWidth="4" strokeLinecap="round" />
        <path d="M1456 638L1470 616L1485 632Z" fill="#f0f" />
      </svg>
    </section>
  );
}

function ImeBar() {
  return (
    <div className="absolute right-0 bottom-[14px] flex h-[26px] w-[165px] items-center gap-[8px] bg-white text-[#44506c]">
      <svg width="28" height="28" viewBox="0 0 28 28" className="-mr-[3px] shrink-0">
        <path d="M1 5L22 0q4 9 5 22L5 28Q0 18 1 5z" fill="#3cb424" />
        <path d="M20 8Q9 5 8 10q0 4 6 4 7 1 6 5-2 4-12 2" fill="none" stroke="#fff" strokeWidth="3.500" />
      </svg>
      <span className={`text-[15px] leading-[20px] font-bold ${UI}`}>英</span>
      <svg width="14" height="14" viewBox="0 0 14 14"><path d="M9 0q7 7-1 13-4 2-8-1 9-1 9-12z" fill="currentColor" /></svg>
      <svg width="12" height="14" viewBox="0 0 12 14"><circle cx="3" cy="4" r="1.500" fill="currentColor" /><path d="M8 5q3 2-1 6" stroke="currentColor" strokeWidth="2" fill="none" /></svg>
      <svg width="17" height="14" viewBox="0 0 17 14" fill="none" stroke="currentColor"><rect x="1" y="1" width="15" height="12" strokeWidth="1.500" /><path d="M3 4.500h11M3 7.500h11" strokeWidth="2" strokeDasharray="2 1" /><path d="M4 10.500h9" /></svg>
      <svg width="12" height="14" viewBox="0 0 12 14" fill="#b8c8c4"><circle cx="6" cy="3.500" r="3" /><path d="M0 14Q0 7 6 7t6 7z" /></svg>
      <svg width="14" height="14" viewBox="0 0 14 14"><path d="M2 12l6-7" stroke="currentColor" strokeWidth="3" /><path d="M11 0L8 3l3 3 3-3q1 5-4 5-5-1-3-5 1-3 4-3z" fill="currentColor" /></svg>
    </div>
  );
}

export default function App() {
  return (
    <main className="relative flex h-screen w-full flex-col overflow-hidden bg-black">
      <header className={`flex h-[23px] shrink-0 items-center gap-[8px] border-t border-[#4a5666] bg-linear-to-b from-[#bdc9d9] to-[#dde7f3] pb-[2px] pl-[2px] text-[13px] text-[#5b6470] ${UI}`}>
        <XIcon />
        Graphic Editor 9.07b2 (00@HY-HYCAM-PC185 - Windows, pid:6924)
      </header>
      <div className="h-[56px] shrink-0 border-t-2 border-b-2 border-l-2 border-t-[#4f7a7c] border-b-[#e8fafa] border-l-[#4f7a7c]">
        <nav className={`flex h-full items-center gap-[18px] border-t-2 border-b-2 border-l-2 border-t-[#d8fafa] border-b-[#4f8080] border-l-[#d8fafa] bg-[#9cdcdc] pb-[3px] pl-[11px] text-[14px] font-bold text-black ${SERIF}`}>
          {menus.map(([a, b, c]) => <button key={a + b + c}>{a}<span className="underline underline-offset-3">{b}</span>{c}</button>)}
        </nav>
      </div>
      <div className="flex min-h-0 flex-1">
        <SidePanel />
        <div className="relative min-w-0 flex-1">
          <Board />
          <div className={`absolute right-0 bottom-0 flex h-[30px] w-[164px] items-end border-b-2 border-l border-b-[#b4f0dc] border-l-[#b4f0dc] bg-[#52cdaf] pl-[4px] text-[16px] leading-[22px] font-bold whitespace-pre text-black ${MONO}`}>Y = 5.817845"</div>
        </div>
      </div>
      <CommandBar />
      <div className={`h-[30px] shrink-0 border-2 border-r-0 border-[#6f8c8c] border-b-white bg-[#b3ffff] text-center text-[12px] leading-[24px] font-bold text-black ${MONO}`}>
        <div className="h-full border border-black border-b-[#4f8888]">cam/bs.d,#5375,Line,XS=0.5,YS=5.0019401,XE=0.5,YE=2.7913401,r20,POS,Ang=90</div>
      </div>
      <div className="h-[10px] shrink-0 bg-[#ffffcf]" />
      <Taskbar />
      <Popview />
      <Excel />
      <ImeBar />
      <div className={`absolute right-[-28px] bottom-[93px] flex size-[46px] items-center rounded-full border-2 border-white bg-linear-to-b from-[#70d060] to-[#28a040] pl-[2px] text-[12px] font-bold text-white ${UI}`}>41</div>
    </main>
  );
}
